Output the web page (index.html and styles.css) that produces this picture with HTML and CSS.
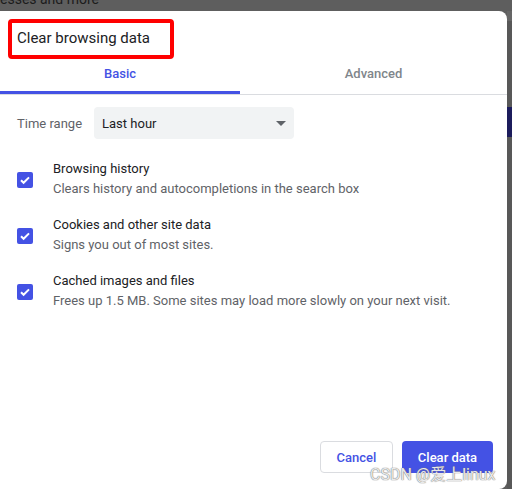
FILE: index.html
```html
<!DOCTYPE html>
<html lang="en">
<head>
    <meta charset="UTF-8">
    <meta name="viewport" content="width=device-width, initial-scale=1.0">
    <title>Clear browsing data</title>
    <link rel="stylesheet" href="styles.css">
</head>
<body>
    <div class="backdrop-top"><span>esses and more</span></div>
    <div class="screen">
        <div class="dialog">
            <div class="dialog-title">
                <span class="title-box">Clear browsing data</span>
            </div>
            <div class="tabs">
                <div class="tab tab-active">Basic</div>
                <div class="tab">Advanced</div>
            </div>
            <div class="tab-body">
                <div class="time-range">
                    <span class="time-label">Time range</span>
                    <div class="select">
                        <span>Last hour</span>
                        <span class="select-arrow"></span>
                    </div>
                </div>
                <!-- Opciones de datos a borrar -->
                <div class="option">
                    <span class="checkbox"><svg viewBox="0 0 16 16" width="16" height="16"><path d="M4 8.2l2.6 2.6L12 5.4" fill="none" stroke="#fff" stroke-width="2"/></svg></span>
                    <div class="option-text">
                        <div class="option-title">Browsing history</div>
                        <div class="option-desc">Clears history and autocompletions in the search box</div>
                    </div>
                </div>
                <div class="option">
                    <span class="checkbox"><svg viewBox="0 0 16 16" width="16" height="16"><path d="M4 8.2l2.6 2.6L12 5.4" fill="none" stroke="#fff" stroke-width="2"/></svg></span>
                    <div class="option-text">
                        <div class="option-title">Cookies and other site data</div>
                        <div class="option-desc">Signs you out of most sites.</div>
                    </div>
                </div>
                <div class="option">
                    <span class="checkbox"><svg viewBox="0 0 16 16" width="16" height="16"><path d="M4 8.2l2.6 2.6L12 5.4" fill="none" stroke="#fff" stroke-width="2"/></svg></span>
                    <div class="option-text">
                        <div class="option-title">Cached images and files</div>
                        <div class="option-desc">Frees up 1.5 MB. Some sites may load more slowly on your next visit.</div>
                    </div>
                </div>
            </div>
            <div class="dialog-buttons">
                <button class="btn btn-cancel">Cancel</button>
                <button class="btn btn-primary">Clear data</button>
            </div>
        </div>
        <div class="side-strip">
            <div class="side-light"></div>
            <div class="side-dark side-upper"></div>
            <div class="side-navy"></div>
            <div class="side-dark"></div>
        </div>
    </div>
    <div class="watermark">CSDN @爱上linux</div>
</body>
</html>
```

FILE: styles.css
```css
body {
    font-family: Roboto, "Noto Sans CJK SC", sans-serif;
    background-color: #5e5e5e;
    margin: 0;
    padding: 0;
    color: #202124;
    width: 512px;
    height: 489px;
    overflow: hidden;
    position: relative;
}
.backdrop-top {
    height: 11px;
    overflow: hidden;
}
.backdrop-top span {
    display: block;
    margin-top: -8px;
    font-size: 14px;
    line-height: 14px;
    color: #1c1c1c;
}
.screen {
    display: flex;
    height: 478px;
}
.dialog {
    width: 507px;
    background: #fff;
    border-radius: 0 8px 8px 0;
    display: flex;
    flex-direction: column;
}
.dialog-title {
    padding: 8px 0 0 8px;
}
.title-box {
    display: block;
    width: 166px;
    height: 40px;
    box-sizing: border-box;
    border: 4px solid #ff0000;
    border-radius: 4px;
    padding-left: 5px;
    font-size: 15px;
    line-height: 31px;
}
.tabs {
    display: flex;
    border-bottom: 1px solid #dadce0;
}
.tab {
    flex: 1;
    text-align: center;
    font-size: 13px;
    font-weight: 500;
    line-height: 16px;
    padding: 7px 0 12px;
    color: #80868b;
}
.tab-active {
    flex: 0 0 240px;
    color: #4452e4;
    box-shadow: inset 0 -3px 0 #4452e4;
}
.tab-body {
    padding: 12px 0 0 17px;
}
.time-range {
    display: flex;
    align-items: center;
    gap: 12px;
}
.time-label {
    font-size: 13px;
    color: #5f6368;
}
.select {
    width: 200px;
    height: 32px;
    box-sizing: border-box;
    background: #f1f3f4;
    border-radius: 4px;
    display: flex;
    align-items: center;
    justify-content: space-between;
    padding: 0 8px 0 8px;
    font-size: 13px;
}
.select-arrow {
    width: 0;
    height: 0;
    border-left: 5px solid transparent;
    border-right: 5px solid transparent;
    border-top: 5px solid #5f6368;
}
.option {
    display: flex;
    align-items: center;
    gap: 20px;
    margin-top: 16px;
}
.time-range + .option {
    margin-top: 20px;
}
.checkbox {
    width: 16px;
    height: 16px;
    background: #4452e4;
    border-radius: 2px;
    display: block;
    margin-top: 2px;
}
.checkbox svg {
    display: block;
}
.option-title {
    font-size: 13px;
    line-height: 20px;
}
.option-desc {
    font-size: 13px;
    line-height: 20px;
    color: #5f6368;
}
.dialog-buttons {
    margin-top: auto;
    display: flex;
    justify-content: flex-end;
    gap: 9px;
    padding: 0 14px 16px 0;
}
.btn {
    font-family: Roboto, sans-serif;
    font-size: 13px;
    font-weight: 500;
    height: 32px;
    border-radius: 4px;
    cursor: pointer;
}
.btn-cancel {
    width: 73px;
    background: #fff;
    color: #4452e4;
    border: 1px solid #dadce0;
}
.btn-primary {
    width: 91px;
    background: #4452e4;
    color: #fff;
    border: none;
}
.side-strip {
    flex: 1;
    display: flex;
    flex-direction: column;
}
.side-light {
    height: 10px;
    background: #666;
}
.side-dark {
    flex: 1;
    background: #585858;
}
.side-upper {
    flex: 0 0 86px;
}
.side-navy {
    height: 30px;
    background: #1c1c5c;
}
.watermark {
    position: absolute;
    left: 370px;
    top: 461px;
    font-size: 16px;
    color: rgba(255, 255, 255, 0.85);
    text-shadow: 0 0 1px #777, 0 0 1px #777;
}
```
